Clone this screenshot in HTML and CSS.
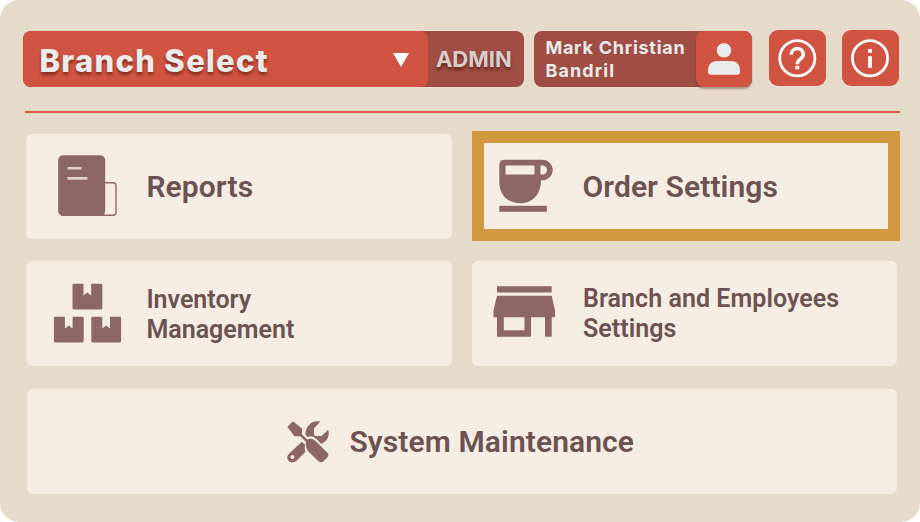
FILE: index.html
```html
<!DOCTYPE html>
<html lang="en">
<head>
<meta charset="utf-8">
<title>Branch Dashboard</title>
<link rel="stylesheet" href="styles.css">
</head>
<body>
<main class="panel">
  <header class="topbar">
    <div class="branch">
      <div class="branch-select">
        <span class="branch-label">Branch Select</span>
        <svg class="caret" viewBox="0 0 16 14"><path d="M0 0H16L8 14Z"/></svg>
      </div>
      <span class="role">ADMIN</span>
    </div>
    <div class="user">
      <span class="user-name"><span class="first">Mark Christian</span><br><span class="last">Bandril</span></span>
      <div class="avatar">
        <svg viewBox="0 0 56 56"><circle cx="28" cy="19.3" r="7.3"/><path d="M21 30H35C41 30 44 34 44 39V40.5Q44 43.8 41 43.8H15Q12 43.8 12 40.5V39C12 34 15 30 21 30Z"/></svg>
      </div>
    </div>
    <button class="square help" aria-label="Help">
      <svg viewBox="0 0 57 56"><circle cx="28.3" cy="28.3" r="17.6" stroke-width="2.8"/><path d="M22.3 24.8C22.3 16.6 34.3 16.6 34.3 24.3C34.3 29.4 28.3 28.9 28.3 34.2" stroke-width="3.5"/><path d="M28.3 35.7V39.3" stroke-width="3.8"/></svg>
    </button>
    <button class="square info" aria-label="Information">
      <svg viewBox="0 0 57 56"><circle cx="28" cy="28.3" r="17.6" stroke-width="2.8"/><path d="M28 26.3V37.7M28 19V22.7" stroke-width="3.8"/></svg>
    </button>
  </header>
  <hr class="rule">
  <nav class="grid">
    <a class="card reports">
      <svg class="icon" viewBox="26.5 134 120 105">
        <rect x="58.7" y="155.3" width="47" height="60.6" rx="5"/>
        <path class="outline" d="M105 182.7H113.5Q116.5 182.7 116.5 185.7V212.3Q116.5 215.3 113.5 215.3H62"/>
        <path class="light" d="M68 168.2H82M68 178.4H88"/>
      </svg>
      <span class="label large">Reports</span>
    </a>
    <a class="card order">
      <svg class="icon" viewBox="484 143 98.5 86">
        <path fill-rule="evenodd" d="M504.5 159.7H542.5A10.3 10.3 0 0 1 542.5 180.3H541C541 195 532 203.3 520.3 203.3C508 203.3 499.3 195 499.3 182V165Q499.3 159.7 504.5 159.7ZM505.5 165.5V174.5H534.5V165.5ZM540.5 165.5V174.5H542.5A4.5 4.5 0 0 0 542.5 165.5Z"/>
        <rect x="499.3" y="205.8" width="47.5" height="6"/>
      </svg>
      <span class="label large">Order Settings</span>
    </a>
    <a class="card inventory">
      <svg class="icon" viewBox="26.5 261.5 120 105">
        <path id="box" d="M74 284.3H84V296L87.8 293L91.7 296V284.3H101.5Q102.8 284.3 102.8 285.6V308.5Q102.8 310 101.3 310H74.5Q73 310 73 308.5V285.3Q73 284.3 74 284.3Z"/>
        <use href="#box" x="-18.6" y="33"/>
        <use href="#box" x="18.8" y="33"/>
      </svg>
      <span class="label">Inventory<br><span class="second">Management</span></span>
    </a>
    <a class="card branches">
      <svg class="icon" viewBox="472 261.5 111 105">
        <path fill-rule="evenodd" d="M497 286.8H551.7V293H497ZM497 296.3H551.7L555 311V317.7H551.7V337.2H545V317.7H531V337.2H497V317.7H493.5V311ZM503.8 317.7V330.7H524.5V317.7Z"/>
      </svg>
      <span class="label">Branch and Employees<br>Settings</span>
    </a>
    <a class="card maintenance">
      <svg class="tools" viewBox="0 0 42 42">
        <path d="M.3 6L5.8.3L15 7.5V13.4L20.2 18.5Q24.5 16.3 28.6 20L40.2 31.4Q42.7 34 40.2 36.5L36.5 40.2Q34 42.5 31.4 40.2L21.2 30.3Q18 26.6 19 21L13.3 15.2H7.5Z"/>
        <path d="M33.2.7L27 7.3V13.7L28.4 15.1H34.6L41.2 8.7C43 15.5 39.5 21.5 34 22.7L29.2 17.8Q25 14 20.5 16L18.5 14C18.2 5.5 25 -1.5 33.2.7Z"/>
        <path fill-rule="evenodd" d="M14.8 20.7L18.2 24Q17 27.5 18.5 30.8L9.5 39.8C3.5 44.3-2.5 38.3 1.7 33.1ZM5.4 34A2 2 0 1 0 5.4 38A2 2 0 1 0 5.4 34Z"/>
      </svg>
      <span class="label large">System Maintenance</span>
    </a>
  </nav>
</main>
</body>
</html>
```
FILE: styles.css
```css
* { box-sizing: border-box; }

body { margin: 0; background: #fff; font-family: Roboto, sans-serif; }

.panel {
  width: 920px;
  height: 522px;
  padding: 30px 20px 0 23.4px;
  border-radius: 19px;
  background: #e6dbca;
  overflow: hidden;
}

.topbar { display: flex; height: 57px; font-family: Inter, sans-serif; }

.branch {
  display: flex;
  width: 500.5px;
  height: 56px;
  margin-top: 1.4px;
  border-radius: 8px;
  background: #a04e44;
}

.branch-select {
  display: flex;
  align-items: center;
  justify-content: space-between;
  width: 405px;
  padding: 0 19px 0 16px;
  border-radius: 8px;
  background: #d05441;
}

.branch-label {
  padding-top: 2px;
  color: #ebebeb;
  font-size: 31px;
  font-weight: 800;
  letter-spacing: 1.3px;
  white-space: nowrap;
  text-shadow: 0 3px 3px rgba(70, 10, 5, .5);
}

.caret { width: 16px; height: 14px; margin-top: 1px; fill: #fff; }

.role {
  padding-left: 7.5px;
  color: #d9cdcc;
  font-size: 22px;
  font-weight: 700;
  line-height: 57px;
  text-shadow: 0 3px 3px rgba(50, 5, 5, .5);
}

.user {
  display: flex;
  justify-content: space-between;
  width: 218px;
  height: 56px;
  margin: 1px 0 0 10.5px;
  border-radius: 8px;
  background: #a04e44;
}

.user-name {
  padding: 6px 0 0 11px;
  color: #ebebeb;
  font-size: 18px;
  font-weight: 700;
  line-height: 22.5px;
  letter-spacing: .75px;
  white-space: nowrap;
}

.last { letter-spacing: 1.1px; }

.avatar {
  width: 56px;
  height: 56px;
  border-radius: 8px;
  background: #d05441;
  box-shadow: 0 2px 2px rgba(80, 35, 25, .4);
}

.avatar svg { display: block; fill: #ebebeb; }

.square {
  width: 57px;
  height: 56px;
  padding: 0;
  border: 0;
  border-radius: 9px;
  background: #d05441;
}

.square svg { display: block; fill: none; stroke: #fff; }

.help { margin-left: 16.6px; }

.info { margin-left: 16.5px; }

.rule {
  height: 2px;
  margin: 24px 0 0 2px;
  border: 0;
  background: #d55a49;
  box-shadow: 0 0 1px rgba(208, 84, 65, .6);
}

.grid {
  display: grid;
  grid-template-columns: 426px 428px;
  grid-template-rows: 105px 105px 105px;
  column-gap: 19.6px;
  row-gap: 23px;
  margin: 21px 0 0 3px;
}

.card {
  display: flex;
  align-items: center;
  border-radius: 6px;
  background: #f5ede3;
  color: #6c5252;
}

.order { height: 110px; margin-top: -3px; border: 12px solid #d0983f; border-radius: 0; }

.inventory, .branches { margin-top: -.6px; height: 105px; }

.branches { width: 425.5px; }

.maintenance { grid-column: 1 / -1; width: 870px; margin-left: 1px; margin-top: -.6px; height: 105px; padding-left: 260px; }

.icon { flex: none; height: 100%; fill: #8d6666; }

.reports .icon, .inventory .icon { width: 120px; }
.order .icon { width: 98.5px; }
.branches .icon { width: 111px; }

.outline { fill: none; stroke: #8d6666; stroke-width: 1.4; }
.light { fill: none; stroke: #dfd1c9; stroke-width: 2.6; }

.tools { width: 42px; height: 42px; margin-right: 20px; fill: #8d6666; }

.label { font-size: 25px; font-weight: 600; line-height: 29.7px; white-space: nowrap; }

.label.large { font-size: 30px; letter-spacing: .1px; }

.order .label { padding-top: 2px; }

.inventory .label { padding-top: 2px; }

.branches .label { letter-spacing: .06px; }
```
